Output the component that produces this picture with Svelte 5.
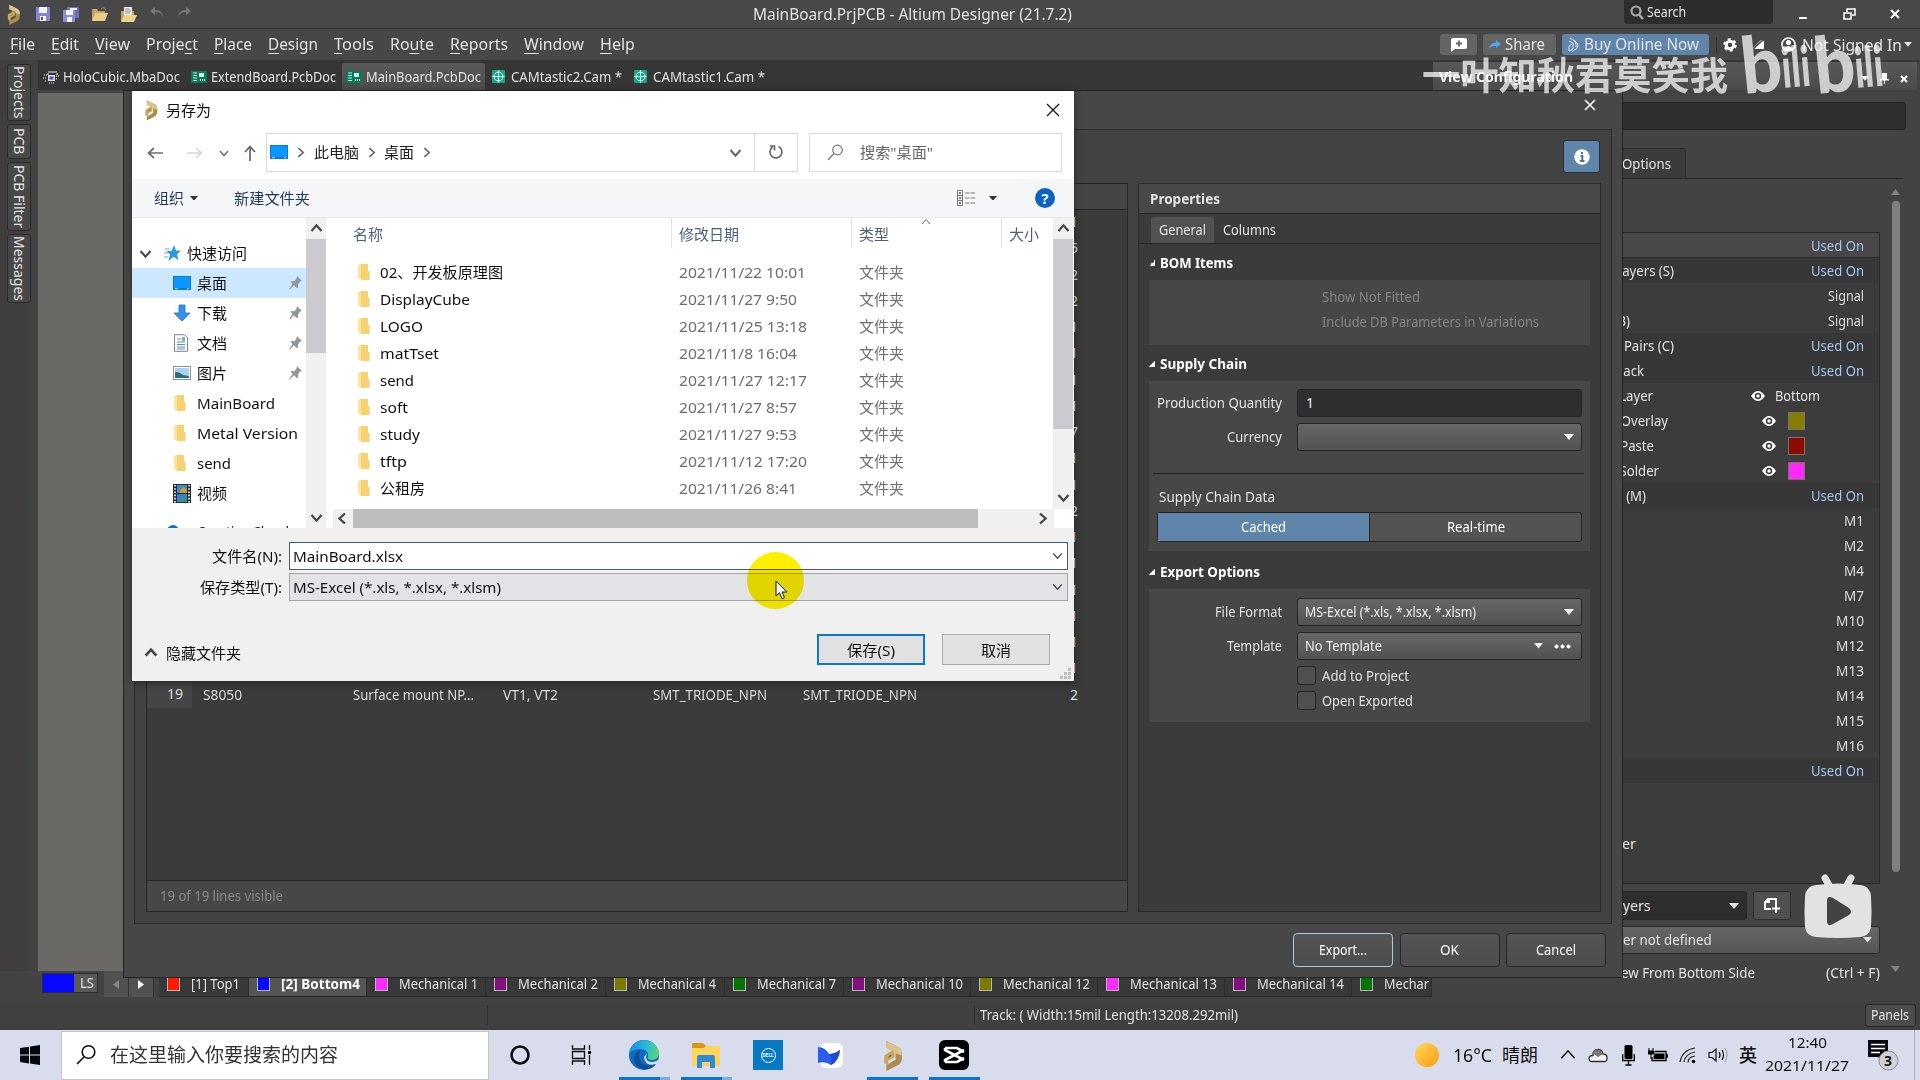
<script>
  // Condenses a label horizontally so that it fills the given width.
  function fit(node, width) {
    if (!width) return;
    const natural = node.getBoundingClientRect().width;
    node.style.transform = `scaleX(${width / natural})`;
    node.style.marginRight = `${width - natural}px`;
  }

  const menus = [
    ['', 'F', 'ile', 25], ['', 'E', 'dit', 28], ['', 'V', 'iew', 35], ['Proje', 'c', 't', 52],
    ['', 'P', 'lace', 38], ['', 'D', 'esign', 50], ['', 'T', 'ools', 40], ['Ro', 'u', 'te', 44],
    ['', 'R', 'eports', 58], ['', 'W', 'indow', 60], ['', 'H', 'elp', 35]
  ];
  const docs = [
    ['mba', 'HoloCubic.MbaDoc', 117, 147],
    ['pcb', 'ExtendBoard.PcbDoc', 125, 155],
    ['pcb', 'MainBoard.PcbDoc', 115, 143],
    ['cam', 'CAMtastic2.Cam *', 111, 142],
    ['cam', 'CAMtastic1.Cam *', 112, 142]
  ];
  const counts = [1, 5, 2, 2, 1, 1, 1, 1, 7, 1, 1, 2, 1, 1, 1, 1, 1, 1, 2];
  const quick = [
    ['desktop', '桌面', 30, true], ['down', '下载', 30, true], ['doc', '文档', 30, true], ['pic', '图片', 30, true],
    ['folder', 'MainBoard', 78, false], ['folder', 'Metal Version', 101, false], ['folder', 'send', 34, false], ['video', '视频', 30, false]
  ];
  const files = [
    ['02、开发板原理图', 123, '2021/11/22 10:01', 127], ['DisplayCube', 90, '2021/11/27 9:50', 118],
    ['LOGO', 43, '2021/11/25 13:18', 128], ['matTset', 59, '2021/11/8 16:04', 118],
    ['send', 34, '2021/11/27 12:17', 128], ['soft', 28, '2021/11/27 8:57', 118],
    ['study', 40, '2021/11/27 9:53', 118], ['tftp', 27, '2021/11/12 17:20', 128],
    ['公租房', 45, '2021/11/26 8:41', 118]
  ];
  const used = 'Used On';
  const config = [
    { r: used, head: true }, { l: 'Layers (S)', e: 240, r: used }, { r: 'Signal' }, { l: '(B)', e: 196, r: 'Signal' },
    { l: 'Pairs (C)', e: 240, r: used }, { l: 'Stack', e: 210, r: used }, { l: 'Layer', e: 219, bottom: true },
    { l: 'Overlay', e: 234, c: '#857c00' }, { l: 'Paste', e: 220, c: '#8c0b00' }, { l: 'Solder', e: 225, c: '#fc2bfb' },
    { l: '(M)', e: 212, r: used }, { r: 'M1' }, { r: 'M2' }, { r: 'M4' }, { r: 'M7' }, { r: 'M10' }, { r: 'M12' },
    { r: 'M13' }, { r: 'M14' }, { r: 'M15' }, { r: 'M16' }, { r: used }
  ];
  const rWidths = { 'Used On': 53, Signal: 36, M1: 20, M2: 20, M4: 20, M7: 20 };
  const layers = [
    ['#ff1a00', '[1] Top1', 49, 90], ['#0909ff', '[2] Bottom4', 79, 118], ['#fc2bfb', 'Mechanical 1', 79, 119],
    ['#84107f', 'Mechanical 2', 80, 120], ['#7d7800', 'Mechanical 4', 78, 119], ['#067306', 'Mechanical 7', 79, 119],
    ['#84107f', 'Mechanical 10', 87, 127], ['#7d7800', 'Mechanical 12', 87, 127], ['#fc2bfb', 'Mechanical 13', 87, 127],
    ['#84107f', 'Mechanical 14', 87, 127], ['#067306', 'Mechar', 45, 80]
  ];
</script>

{#snippet t(s, w)}<span class="t" use:fit={w}>{s}</span>{/snippet}

{#snippet altium(w, h)}
  <svg width={w} height={h} viewBox="0 0 20 30">
    <path d="M4 1L16 7Q19 9 19 13V18Q19 22 16 24L4 30V24.500L13 19V11.500L4 7.500z" fill="#ab8d50" />
    <path d="M4 1L16 7Q19 9 19 13V15L13 13V11.500L4 7.500z" fill="#dcc387" />
    <path d="M2 15L9 10.500Q12 10 12 13V16.500L6 20V25L2 22.500z" fill="#c6a763" />
    <path d="M6 16L9 14v1.500L6 17.500z" fill="#8d7340" />
  </svg>
{/snippet}

{#snippet icon(kind)}
  {#if kind === 'folder'}
    <svg width="14" height="18" viewBox="0 0 14 18"><path d="M1 2 L3 1 H11 V8 H12.5 V17 L3 16.5 L1 15 Z" fill="#ffe59a" /><path d="M4 1 H11 V8 H12.5 V17 H4 Z" fill="#f5d274" /></svg>
  {:else if kind === 'desktop'}
    <svg width="18" height="14" viewBox="0 0 18 14"><rect width="18" height="14" fill="#0d78d4" /><rect x="1" y="1" width="16" height="11" fill="#0a98ff" /><path d="M2 12.7h3M14 12.7h2" stroke="#bfe3ff" /></svg>
  {:else if kind === 'down'}
    <svg width="18" height="18" viewBox="0 0 18 18"><path d="M6 1h6v8h5l-8 8-8-8h5z" fill="#3392e8" stroke="#1a73c6" stroke-width=".8" /></svg>
  {:else if kind === 'doc'}
    <svg width="16" height="18" viewBox="0 0 16 18"><path d="M1.5.7h10l3 3v13.6h-13z" fill="#fff" stroke="#7d858c" /><path d="M4 5h4M4 8h8M4 10.500h8M4 13h8M4 15h8" stroke="#5b8fae" /><path d="M9 3h3v4H9z" fill="#7fa7bd" /></svg>
  {:else if kind === 'pic'}
    <svg width="18" height="14" viewBox="0 0 18 14"><rect x=".5" y=".5" width="17" height="13" fill="#fff" stroke="#8b949b" /><rect x="2" y="2" width="14" height="10" fill="#a8d3ef" /><path d="M2 6q5 0 8 3l6 1v2H2z" fill="#2c6f7b" /></svg>
  {:else if kind === 'video'}
    <svg width="18" height="19" viewBox="0 0 18 19"><rect width="18" height="19" fill="#262c33" /><rect x="4" y="1" width="10" height="8" fill="#4986c5" /><rect x="4" y="10" width="10" height="8" fill="#3f7fd0" /><path d="M7 7l3-4 4 3v3H7z" fill="#c4a52c" /><path d="M6 17l4-4 4 3v2z" fill="#2d9b68" /><path d="M2 1v18M16 1v18" stroke="#fff" stroke-width="1.600" stroke-dasharray="1.600 1.600" /></svg>
  {:else if kind === 'mba'}
    <svg width="17" height="14" viewBox="0 0 17 14"><path d="M5 2h9M4 4h2M13 4h2" stroke="#aaa" stroke-width="1.500" /><rect x="5" y="5" width="7" height="6" fill="#ddd" /><rect x="6.500" y="6.500" width="4" height="3" fill="#5154bf" /><path d="M1 5h3M0 8h3M2 11h2M13 6h3M13 9h2M6 13h6" stroke="#bbb" stroke-width="1.500" stroke-dasharray="1 1" /></svg>
  {:else if kind === 'pcb'}
    <svg width="16" height="12" viewBox="0 0 16 12"><rect width="16" height="12" fill="#08795a" /><path d="M2 2h4M2 4.500h4M2 7h4M2 9.500h4" stroke="#cdeee2" stroke-width="1.200" /><rect x="8" y="2" width="5" height="4" fill="#d9f4ea" /><path d="M9 9h6" stroke="#bfe6d8" stroke-width="2" stroke-dasharray="1 1" /></svg>
  {:else if kind === 'cam'}
    <svg width="13" height="13" viewBox="0 0 13 13"><rect width="13" height="13" rx="1" fill="#12a884" /><circle cx="6.500" cy="6.500" r="4.500" fill="none" stroke="#dff7f0" /><path d="M6.500 0v13M0 6.500h13" stroke="#dff7f0" /></svg>
  {/if}
{/snippet}

{#snippet chev(rot, size, color, sw)}
  <svg class={rot} width={size} height={size} viewBox="0 0 12 12"><path d="M2 4l4 4.500L10 4" fill="none" stroke={color} stroke-width={sw} /></svg>
{/snippet}

{#snippet caret(w)}
  <svg width={w} height={w * 0.6} viewBox="0 0 10 6"><path d="M0 0h10L5 6z" fill="currentColor" /></svg>
{/snippet}

{#snippet eye()}
  <svg width="14" height="12" viewBox="0 0 14 12"><path d="M0 6Q7-4 14 6Q7 16 0 6z" fill="#fff" /><circle cx="7" cy="6" r="3.200" fill="#3b3b3b" /><circle cx="7" cy="6" r="1.700" fill="#fff" /></svg>
{/snippet}

<div class="screen">
  <header class="title">
    <div class="quickbar">
      {@render altium(15, 21)}
      <svg width="14" height="14" viewBox="0 0 14 14"><path d="M0 0h14v14H0z" fill="#8785cf" /><path d="M3 0h8v6H3zM4 9h6v5H4z" fill="#f3f3ff" /><path d="M5 10h2v3H5z" fill="#555" /></svg>
      <svg width="16" height="15" viewBox="0 0 16 15"><path d="M4 0h12v11H4z" fill="#6f6cba" /><path d="M7 1h7v2H7z" fill="#eee" /><path d="M0 3h12v12H0z" fill="#8d8bd3" /><path d="M3 3h7v5H3zM4 10h5v5H4z" fill="#f3f3ff" /></svg>
      <svg width="16" height="14" viewBox="0 0 16 14"><path d="M0 2h5l1 2h7v9H0z" fill="#c7a55c" /><path d="M3 6h13l-3 8H0z" fill="#eccb83" /><path d="M9 2q3-3 5 1" fill="none" stroke="#86969b" /></svg>
      <svg width="16" height="15" viewBox="0 0 16 15"><path d="M0 4h13v10H0z" fill="#c7a55c" /><path d="M3 0h8v9H3z" fill="#f5f5f5" /><path d="M4 2h5M4 4h6M4 6h5" stroke="#888" /><path d="M3 8h13l-3 7H0z" fill="#f1d08a" /></svg>
      <svg class="undo" width="14" height="11" viewBox="0 0 14 11"><path d="M5 0L0 4l5 4V5.500q6-1 8 5Q13 3 5 3z" fill="#777" /></svg>
      <svg class="undo" width="14" height="11" viewBox="0 0 14 11"><path d="M9 0l5 4-5 4V5.500Q3 4.500 1 10.500 1 3 9 3z" fill="#777" /></svg>
    </div>
    <div class="caption">{@render t('MainBoard.PrjPCB - Altium Designer (21.7.2)', 319)}</div>
    <div class="search">
      <svg width="14" height="15" viewBox="0 0 14 15"><circle cx="6" cy="6" r="4.500" fill="none" stroke="#aaa" stroke-width="2.200" /><path d="M9 9.500l4 4.500" stroke="#aaa" stroke-width="2.500" /></svg>
      {@render t('Search', 39)}
    </div>
    <div class="winbtns">
      <svg width="12" height="14" viewBox="0 0 12 14"><path d="M2 11h8" stroke="#fff" stroke-width="2" /></svg>
      <svg width="13" height="12" viewBox="0 0 13 12"><path d="M4 4V1h8v6H9M1 5h7v6H1z" fill="none" stroke="#fff" stroke-width="1.500" /></svg>
      <svg width="10" height="10" viewBox="0 0 10 10"><path d="M1 1l8 8M9 1L1 9" stroke="#fff" stroke-width="2" /></svg>
    </div>
  </header>

  <nav class="menu">
    <div class="items">
      {#each menus as m}
        <span class="t" use:fit={m[3]}>{m[0]}<u>{m[1]}</u>{m[2]}</span>
      {/each}
    </div>
    <div class="btn comment"><svg width="17" height="14" viewBox="0 0 17 14"><path d="M2 0h13q2 0 2 2v7q0 2-2 2H5l-4 3V2q0-2 2-2z" fill="#fff" /><path d="M9 2.500v6M6 5.500h6" stroke="#666" stroke-width="1.800" /></svg></div>
    <div class="btn share"><svg width="12" height="9" viewBox="0 0 12 9"><path d="M7 0l5 4-5 4V6Q2 5.500 0 9 1 2.500 7 2.500z" fill="#50a5f5" /></svg>{@render t('Share', 40)}</div>
    <div class="btn buy"><svg width="11" height="15" viewBox="0 0 11 15"><path d="M2 1l5 3q3 2 3 5t-6 5.500M1 4l4 2v6L1 14V9l3-2M5 3l3 3v4" fill="none" stroke="#dce8f5" /></svg>{@render t('Buy Online Now', 115)}</div>
    <div class="account">
      <svg width="14" height="14" viewBox="0 0 14 14"><circle cx="7" cy="7" r="3.700" fill="none" stroke="#fff" stroke-width="3" /><circle cx="7" cy="7" r="5.700" fill="none" stroke="#fff" stroke-width="2" stroke-dasharray="3 2.970" /></svg>
      <svg width="14" height="12" viewBox="0 0 14 12"><path d="M1 10L10 1l3 1v8H4z" fill="#fff" /><path d="M0 12L13 0" stroke="#474747" stroke-width="1.500" /></svg>
      <svg width="15" height="15" viewBox="0 0 15 15"><circle cx="7.500" cy="7.500" r="6.500" fill="none" stroke="#fff" stroke-width="1.600" /><circle cx="7.500" cy="5.500" r="2.600" fill="#fff" /><path d="M3 12q4.500-6 9 0-4.500 4-9 0" fill="#fff" /></svg>
      {@render t('Not Signed In', 100)}
      {@render caret(8)}
    </div>
  </nav>

  <div class="doctabs">
    {#each docs as d, i}
      <div class="doc" class:on={i === 2} style:width="{d[3]}px">{@render icon(d[0])}{@render t(d[1], d[2])}</div>
    {/each}
  </div>

  <main class="work">
    <aside class="rail">
      <div class="r1">Projects</div><div class="r2">PCB</div><div class="r3">PCB Filter</div><div class="r4">Messages</div>
    </aside>
    <div class="canvas"></div>
    <section class="view">
      <div class="vtitle"><b>{@render t('View Configuration', 134)}</b>
        <span class="pins">{@render caret(8)}<svg width="9" height="11" viewBox="0 0 9 11"><path d="M2 0h5v6h2v1.500H0V6h2z" fill="#fff" /><path d="M4.500 7v4" stroke="#fff" /></svg><svg width="8" height="8" viewBox="0 0 8 8"><path d="M1 1l6 6M7 1L1 7" stroke="#fff" stroke-width="2" /></svg></span>
      </div>
      <div class="vfield"></div>
      <div class="vtabs"><div>{@render t('Options', 49)}</div></div>
      <div class="vbody">
        <div class="vmain">
          <div class="vlist">
            {#each config as c}
              <div class="vrow" class:head={c.head} class:dim={c.r === used && !c.head}>
                {#if c.l}<span class="vl" style:width="{c.e}px">{c.l}</span>{/if}
                {#if c.bottom}<span class="vb">{@render eye()}{@render t('Bottom', 45)}</span>{/if}
                {#if c.c}<span class="vs">{@render eye()}<i style:background={c.c}></i></span>{/if}
                {#if c.r}<span class="vr" class:link={c.r === used}>{@render t(c.r, rWidths[c.r] ?? 28)}</span>{/if}
              </div>
            {/each}
            <div class="other"><span>er</span></div>
          </div>
          <div class="vsel">
            <div class="dark"><span>ayers</span>{@render caret(10)}</div>
            <div class="add"><svg width="17" height="17" viewBox="0 0 17 17"><path d="M7 12H1V5l3-3h8v5M1 5h4V2M12 7v9M8 11.500h8" fill="none" stroke="#fff" stroke-width="1.800" /></svg></div>
            <svg width="13" height="14" viewBox="0 0 13 14"><path d="M1 1h9l2 2v10H1zM4 1v4h5V1M3 13V8h7v5" fill="none" stroke="#999" stroke-width="1.500" /></svg>
            <svg width="11" height="14" viewBox="0 0 11 14"><path d="M0 2h11M3 1h5M2 4h7v9H2z" stroke="#aaa" fill="#999" stroke-width="1.500" /></svg>
          </div>
          <div class="vdef"><span>Layer not defined</span>{@render caret(9)}</div>
          <div class="vflip"><span>View From Bottom Side</span>{@render t('(Ctrl + F)', 54)}</div>
        </div>
        <div class="vscroll"><svg width="9" height="6" viewBox="0 0 9 6"><path d="M0 6h9L4.500 0z" fill="#828282" /></svg><i></i><svg width="9" height="6" viewBox="0 0 9 6"><path d="M0 0h9L4.500 6z" fill="#828282" /></svg></div>
      </div>
    </section>
  </main>

  <div class="layers">
    <div class="ls"><i></i><span>{@render t('LS', 14)}</span></div>
    <div class="arr"><svg width="6" height="9" viewBox="0 0 6 9"><path d="M6 0v9L0 4.500z" fill="#858585" /></svg></div>
    <div class="arr"><svg width="6" height="9" viewBox="0 0 6 9"><path d="M0 0v9l6-4.500z" fill="#fff" /></svg></div>
    <div class="ltabs">
      {#each layers as l, i}
        <div class="ltab" class:on={i === 1} style:width="{l[3]}px"><i style:background={l[0]}></i>{@render t(l[1], l[2])}</div>
      {/each}
    </div>
  </div>

  <footer class="status">
    <div class="s1"></div><div class="s2"></div>
    <div class="s3">{@render t('Track: ( Width:15mil Length:13208.292mil)', 258)}</div>
    <div class="panels">{@render t('Panels', 38)}</div>
  </footer>

  <div class="taskbar">
    <div class="start"><svg width="20" height="20" viewBox="0 0 20 20"><path d="M0 3l9-1.300V9.500H0zM10 1.500L20 0v9.500H10zM0 10.500h9v7.900L0 17zM10 10.500h10V20l-10-1.500z" fill="#05060f" /></svg></div>
    <div class="tsearch"><svg width="22" height="22" viewBox="0 0 22 22"><circle cx="13.500" cy="8" r="6.300" fill="none" stroke="#111" stroke-width="1.600" /><path d="M9 13l-7 7" stroke="#111" stroke-width="1.600" /></svg>{@render t('在这里输入你要搜索的内容', 228)}</div>
    <div class="apps">
      <div><svg width="22" height="22" viewBox="0 0 22 22"><circle cx="11" cy="11" r="8.500" fill="none" stroke="#0b0c14" stroke-width="2.600" /></svg></div>
      <div><svg width="22" height="22" viewBox="0 0 22 22"><path d="M1.500 1v4h12V1M1.500 21v-4h12v4M1.500 7.500h12v7h-12zM18.500 1v5M18.500 11v10" fill="none" stroke="#0b0c14" stroke-width="1.300" /><rect x="17" y="7" width="3" height="3" /></svg></div>
      <div class="run split"><svg width="30" height="30" viewBox="0 0 30 30">
        <defs><linearGradient id="edge" x1="0" y1="0.3" x2="1" y2="0.5"><stop offset="0" stop-color="#168de0" /><stop offset=".55" stop-color="#27b9da" /><stop offset="1" stop-color="#55d873" /></linearGradient></defs>
        <circle cx="15" cy="15" r="15" fill="#0f69bd" /><path d="M0 14C1 5 8 0 15 0c9 0 15 7 15 13 0 5-4 7-7 7-4 0-5-2-4-4 1-4-3-7-8-7-6 0-10 3-11 5z" fill="url(#edge)" /><path d="M10 15c0 9 7 13 17 9-7 9-20 6-22-4 0-5 3-9 6-10z" fill="#0c4d9c" /><path d="M18 13c-2 5-1 8 4 9 3 0 5-.5 7-2l1 1-3 3q-11 3-12-7z" fill="#d8dcec" />
      </svg></div>
      <div class="run split"><svg width="28" height="25" viewBox="0 0 28 25"><path d="M0 1q0-1 1-1h10l3 3-3 4H0z" fill="#d9980f" /><path d="M0 5h12l3-2h12q1 0 1 1v19H0z" fill="#ffd45d" /><path d="M5 25V14q0-2 2-2h14q2 0 2 2v11h-5v-6h-8v6z" fill="#2f8bd6" /></svg></div>
      <div><span class="dell"><b>DELL</b></span></div>
      <div><svg width="25" height="25" viewBox="0 0 25 25"><rect x="2" width="23" height="25" rx="6" fill="#fff" /><path d="M0 4Q7 4 11 11q6 0 11-4-1 11-9 15-6-4-13-2z" fill="#2b5df0" /><path d="M11 11q6 0 11-4-1 11-9 15 2-6-2-11z" fill="#1c4bd0" /></svg></div>
      <div class="run">{@render altium(23, 31)}</div>
      <div class="run"><svg width="30" height="30" viewBox="0 0 30 30"><rect width="30" height="30" rx="6" fill="#000" /><path d="M6 8h12l7 4M6 22h12l7-4M25 10L6 20M6 10l19 10" fill="none" stroke="#fff" stroke-width="2.600" /><path d="M6 8v3M6 19v3" stroke="#fff" stroke-width="2.500" /></svg></div>
    </div>
    <div class="tray">
      <div><span class="sun"></span></div>
      <div class="big">{@render t('16°C', 39)}</div>
      <div class="big">{@render t('晴朗', 36)}</div>
      <div class="gap"></div>
      <div>{@render chev('up', 20, '#111', 0.9)}</div>
      <div><svg width="20" height="15" viewBox="0 0 20 15"><path d="M4 13.500q-3 0-3-3t4-3q0-6 5-6 4 0 5 4.500 4 0 4 4t-3 3.500z" fill="#f2f3f5" stroke="#333" stroke-width="1.300" /><path d="M4 5q3-5 7-3 3 1 4 4l-5 3z" fill="#777" /></svg></div>
      <div><svg width="13" height="21" viewBox="0 0 13 21"><rect x="2.500" width="8" height="14" rx="1.500" /><path d="M.7 9v6.500h11.600V9M6.500 15v5M3.500 20h6" fill="none" stroke="#000" stroke-width="1.300" /></svg></div>
      <div><svg width="20" height="15" viewBox="0 0 20 15"><path d="M7 3.500h11v9H4V9" fill="none" stroke="#000" stroke-width="1.300" /><path d="M7 5.500h9.500V11H5.500V8zM18 6h2v4h-2z" /><path d="M1 0v3M5 0v3M0 3h6v3H0zM3 6v5" fill="#000" stroke="#000" /></svg></div>
      <div><svg width="18" height="17" viewBox="0 0 18 17"><path d="M1 15Q3 3 16 1M5 15Q6 7 16 5M9 15.500Q9 10 16 9" fill="none" stroke="#222" stroke-width="1.200" /><circle cx="14.500" cy="14.500" r="1.800" /></svg></div>
      <div><svg width="20" height="16" viewBox="0 0 20 16"><path d="M1 5.500h3L8 2v12L4 10.500H1z" fill="none" stroke="#111" stroke-width="1.200" /><path d="M11 5q2 3 0 6M14 3q3 5 0 10" fill="none" stroke="#111" stroke-width="1.200" /><path d="M17 1q4 7 0 14" fill="none" stroke="#999" /></svg></div>
      <div class="ime">英</div>
      <div class="clock">{@render t('12:40', 39)}{@render t('2021/11/27', 84)}</div>
      <div class="note"><svg width="32" height="32" viewBox="0 0 32 32"><path d="M0 1h20v17h-6v4l-4-4H0z" fill="#05060f" /><path d="M3 5.500h14M3 9.500h14M3 13.500h9" stroke="#fff" stroke-width="1.500" /><circle cx="20.500" cy="21.500" r="9.500" fill="#d0d1d6" stroke="#8b8c92" /></svg><b>3</b></div>
    </div>
  </div>

  <!-- Bill of materials dialog -->
  <section class="bom">
    <div class="btitle"><svg width="12" height="12" viewBox="0 0 12 12"><path d="M1 1l10 10M11 1L1 11" stroke="#fff" stroke-width="1.600" /></svg></div>
    <div class="binner">
      <div class="binfo"><div><svg width="16" height="16" viewBox="0 0 16 16"><circle cx="8" cy="8" r="7.700" fill="#fff" /><path d="M8 3v2.200M6.500 7H8.300v4.500M6 12h4.500" stroke="#4c6f94" stroke-width="2" fill="none" /></svg></div></div>
      <div class="bcols">
        <div class="grid">
          <div class="ghead"></div>
          <div class="gbody">
            {#each counts as n, i}
              <div class="grow">
                {#if i === 18}
                  <span class="idx">{i + 1}</span>
                  <span class="c1">{@render t('S8050', 39)}</span><span class="c2">{@render t('Surface mount NP...', 121)}</span><span class="c3">{@render t('VT1, VT2', 55)}</span><span class="c4">{@render t('SMT_TRIODE_NPN', 114)}</span><span class="c4">{@render t('SMT_TRIODE_NPN', 114)}</span>
                {/if}
                <span class="qty">{n}</span>
              </div>
            {/each}
          </div>
          <div class="gfoot">{@render t('19 of 19 lines visible', 123)}</div>
        </div>
        <div class="props">
          <div class="ptitle"><b>{@render t('Properties', 70)}</b></div>
          <div class="ptabs"><span class="on">{@render t('General', 47)}</span><span>{@render t('Columns', 53)}</span></div>
          <div class="pbody">
            <h4><s></s>{@render t('BOM Items', 73)}</h4>
            <div class="box b1"><p>{@render t('Show Not Fitted', 98)}</p><p>{@render t('Include DB Parameters in Variations', 217)}</p></div>
            <h4 class="h2"><s></s>{@render t('Supply Chain', 87)}</h4>
            <div class="box b2">
              <div class="field"><div class="lab">{@render t('Production Quantity', 125)}</div><div class="inp">1</div></div>
              <div class="field"><div class="lab">{@render t('Currency', 55)}</div><div class="pick"><div></div>{@render caret(10)}</div></div>
              <hr />
              <div class="scd">{@render t('Supply Chain Data', 116)}</div>
              <div class="toggle"><span class="on">{@render t('Cached', 45)}</span><span>{@render t('Real-time', 58)}</span></div>
            </div>
            <h4 class="h3"><s></s>{@render t('Export Options', 100)}</h4>
            <div class="box b3">
              <div class="field"><div class="lab">{@render t('File Format', 67)}</div><div class="pick"><div>{@render t('MS-Excel (*.xls, *.xlsx, *.xlsm)', 171)}</div>{@render caret(10)}</div></div>
              <div class="field"><div class="lab">{@render t('Template', 55)}</div><div class="pick"><div>{@render t('No Template', 77)}</div>{@render caret(9)}<svg class="dots" width="17" height="5" viewBox="0 0 17 5"><circle cx="2.500" cy="2.500" r="2" fill="#fff" /><circle cx="8.500" cy="2.500" r="2" fill="#fff" /><circle cx="14.500" cy="2.500" r="2" fill="#fff" /></svg></div></div>
              <div class="chk"><i></i>{@render t('Add to Project', 87)}</div>
              <div class="chk"><i></i>{@render t('Open Exported', 91)}</div>
            </div>
          </div>
        </div>
      </div>
    </div>
    <div class="bbtns"><span class="focus">{@render t('Export...', 48)}</span><span>{@render t('OK', 19)}</span><span>{@render t('Cancel', 40)}</span></div>
  </section>

  <!-- Save-as dialog -->
  <section class="save">
    <div class="sv-title">{@render altium(14, 22)}{@render t('另存为', 45)}<svg class="x" width="14" height="14" viewBox="0 0 14 14"><path d="M1 1l12 12M13 1L1 13" stroke="#111" stroke-width="1.200" /></svg></div>
    <div class="sv-addr">
      <svg width="16" height="12" viewBox="0 0 16 12"><path d="M7 1L1.500 6 7 11M1.500 6H16" fill="none" stroke="#6e6e6e" stroke-width="1.700" /></svg>
      <svg width="16" height="12" viewBox="0 0 16 12"><path d="M9 1l5.500 5L9 11M14.500 6H0" fill="none" stroke="#d4d4d4" stroke-width="1.500" /></svg>
      {@render chev('d', 12, '#777', 1.800)}
      <svg width="12" height="16" viewBox="0 0 12 16"><path d="M1 7L6 1.500 11 7M6 1.500V16" fill="none" stroke="#666" stroke-width="1.700" /></svg>
      <div class="path">
        {@render icon('desktop')}{@render chev('r', 13, '#666', 1.500)}{@render t('此电脑', 45)}{@render chev('r', 13, '#666', 1.500)}{@render t('桌面', 30)}{@render chev('r', 13, '#666', 1.500)}
        <span class="grow1"></span>{@render chev('d', 15, '#666', 1.600)}
        <div class="refresh"><svg width="16" height="16" viewBox="0 0 16 16"><path d="M10.500 2.500A6 6 0 1 1 4.500 3M2 2h4.500v4.500" fill="none" stroke="#666" stroke-width="1.700" /></svg></div>
      </div>
      <div class="find"><svg width="17" height="17" viewBox="0 0 17 17"><circle cx="10.500" cy="6" r="4.800" fill="none" stroke="#777" stroke-width="1.200" /><path d="M7 9.500l-6 6.500" stroke="#777" stroke-width="1.200" /></svg>{@render t('搜索"桌面"', 73)}</div>
    </div>
    <div class="sv-tool">
      {@render t('组织', 30)}<em>{@render caret(8)}</em>{@render t('新建文件夹', 76)}
      <span class="grow1"></span>
      <svg width="19" height="16" viewBox="0 0 19 16"><path d="M.5.500h5v15h-5zM.5 5.500h5M.5 10.500h5" fill="none" stroke="#777" /><path d="M2 3h2M2 8h2M2 13h2" stroke="#555" stroke-width="1.500" /><path d="M8 3h11M8 8h11M8 13h11" stroke="#777" stroke-dasharray="4.500 1" /></svg>
      <em>{@render caret(8)}</em>
      <span class="help">?</span>
    </div>
    <div class="sv-body">
      <div class="nav">
        <div class="nrow root">{@render chev('d', 15, '#444', 1.600)}<svg width="17" height="16" viewBox="0 0 17 16"><path d="M10 0l2 5.500 5 .2-4 3.500 1.500 6-5-3.400L4.500 16 6 9.500 2.500 6h5z" fill="#2d98e8" /><path d="M1 4h4M0 8h4M0 12h4" stroke="#57adf0" /></svg>{@render t('快速访问', 60)}</div>
        {#each quick as q, i}
          <div class="nrow" class:chosen={i === 0}><span class="ic">{@render icon(q[0])}</span>{@render t(q[1], q[2])}
            {#if q[3]}<svg class="pin" width="13" height="14" viewBox="0 0 13 14"><path d="M8 0l5 5-2 .6-2 3 .2 3L7.500 12 4.800 9.200 1 13.500 0 13.500 3.500 8 1.500 5.500 2.500 5l3 .2L7.700 2z" fill="#8e979e" /></svg>{/if}
          </div>
        {/each}
        <div class="nrow wps"><span class="ic"><i></i></span>{@render t('Creative Cloud', 92)}</div>
      </div>
      <div class="vbar">{@render chev('up', 15, '#444', 1.800)}<i></i><span class="grow1"></span>{@render chev('d', 15, '#444', 1.800)}</div>
      <div class="list">
        <div class="lmain">
          <div class="lcols">
            <div class="lhead"><span class="n">{@render t('名称', 30)}</span><span class="dt">{@render t('修改日期', 60)}</span><span class="ty">{@render t('类型', 30)}<em>{@render chev('up', 12, '#666', 1)}</em></span><span class="sz">{@render t('大小', 30)}</span></div>
            {#each files as f}
              <div class="lrow"><span class="ic">{@render icon('folder')}</span><span class="n">{@render t(f[0], f[1])}</span><span class="dt">{@render t(f[2], f[3])}</span><span class="ty">{@render t('文件夹', 45)}</span></div>
            {/each}
            <div class="lrow last"><svg width="14" height="18" viewBox="0 0 14 18"><path d="M.7.700h9l3.600 3.600V17H.7zM9 1v4h4" fill="none" stroke="#777" /></svg></div>
          </div>
          <div class="vbar v2">{@render chev('up', 15, '#444', 1.800)}<i></i><span class="grow1"></span>{@render chev('d', 15, '#444', 1.800)}</div>
        </div>
        <div class="hbar">{@render chev('l', 15, '#444', 1.800)}<i></i><span class="grow1"></span>{@render chev('r', 15, '#444', 1.800)}<b></b></div>
      </div>
    </div>
    <div class="sv-form">
      <div class="frow"><div class="cap">{@render t('文件名(N):', 70)}</div><div class="fld white">{@render t('MainBoard.xlsx', 110)}{@render chev('d', 13, '#444', 1.200)}</div></div>
      <div class="frow"><div class="cap">{@render t('保存类型(T):', 82)}</div><div class="fld">{@render t('MS-Excel (*.xls, *.xlsx, *.xlsm)', 208)}{@render chev('d', 13, '#444', 1.200)}</div></div>
      <div class="acts"><div class="hide">{@render chev('up', 16, '#444', 2)}{@render t('隐藏文件夹', 75)}</div><span class="grow1"></span><span class="b pri">{@render t('保存(S)', 48)}</span><span class="b">{@render t('取消', 30)}</span></div>
    </div>
    <svg class="grip" width="12" height="12" viewBox="0 0 12 12"><path d="M8 0h3v3H8zM4 4h3v3H4zM8 4h3v3H8zM0 8h3v3H0zM4 8h3v3H4zM8 8h3v3H8z" fill="#bbb" /></svg>
    <div class="spot"></div>
    <svg class="cursor" width="13" height="20" viewBox="0 0 13 20"><path d="M1 1v15l3.500-3.300 2.500 6 2.500-1.200L7 12h5z" fill="#fff" stroke="#111" /></svg>
  </section>

  <div class="mark">
    <span class="who">{@render t('一叶知秋君莫笑我', 306)}</span>
    <span class="logo"><b class="bb">b</b><b class="ii">ili</b><b class="bb">b</b><b class="ii">ili</b></span>
  </div>
  <svg class="tv" width="68" height="66" viewBox="0 0 68 66"><path d="M21 4l5 9M47 4l-5 9" stroke="#e2e2e2" stroke-width="7" stroke-linecap="round" /><path d="M12 11Q34 8 56 11 66 12 67 22q1 16 0 31-1 9-11 10-22 2-44 0Q2 62 1 53 0 38 1 22 2 12 12 11zM23 27V48Q24 53 29 50L45 41Q49 38 45 34L29 24Q23 21 23 27z" fill="#e2e2e2" fill-rule="evenodd" /></svg>
</div>

<style>
  :global(body) { margin: 0; overflow: hidden; }
  .screen, .screen :global(*) { box-sizing: border-box; }
  .screen { position: relative; width: 1920px; height: 1080px; overflow: hidden; display: flex; flex-direction: column; background: #434343; color: #e3e3e3; font: 14px/20px "Noto Sans", "Noto Sans CJK SC", sans-serif; }
  svg { display: block; flex: none; }
  .t { display: inline-block; white-space: pre; transform-origin: 0 50%; flex: none; }
  .grow1 { flex: 1; }
  .up { transform: rotate(180deg); }
  .r { transform: rotate(-90deg); }
  .l { transform: rotate(90deg); }

  .title { height: 29px; flex: none; background: #484848; border-bottom: 1px solid #323232; display: grid; grid-template-columns: 753px 871px 149px 1fr; }
  .quickbar { display: flex; align-items: center; padding: 0 0 1px 6px; gap: 13px; }
  .quickbar svg:first-child { margin-right: 2px; }
  .quickbar .undo { margin: 0 0 4px; }
  .caption { font-size: 16px; line-height: 29px; }
  .search { background: #2d2d2d; border-radius: 0 0 4px 4px; height: 24px; display: flex; align-items: center; padding: 0 0 0 6px; gap: 3px; }
  .winbtns { display: flex; align-items: center; padding: 0 0 2px 24px; gap: 34px; }

  .menu { height: 31px; flex: none; background: #474747; display: flex; align-items: center; font-size: 17px; }
  .items { display: flex; gap: 16px; padding: 0 0 2px 10px; width: 1440px; }
  .menu u { text-underline-offset: 3px; text-decoration-thickness: 1px; }
  .btn { height: 21px; background: #646464; border-radius: 3px; display: flex; align-items: center; gap: 5px; margin-right: 6px; font-size: 16px; padding-left: 6px; }
  .btn .t { margin-top: -1px; }
  .comment { width: 37px; padding-left: 10px; }
  .share { width: 73px; gap: 4px; }
  .buy { width: 147px; background: #5f85ab; }
  .account { display: flex; align-items: center; padding-left: 6px; font-size: 16px; flex: 1; border-left: 1px solid #333; height: 16px; margin-left: 1px; }
  .account svg:nth-child(2) { margin: 0 13px 0 14px; }
  .account svg:nth-child(3) { margin-right: 6px; margin-left: 3px; }
  .account svg:last-child { margin-left: 2px; }

  .doctabs { height: 30px; flex: none; background: #363636; display: flex; padding: 3px 0 0 39px; }
  .doc { display: flex; align-items: center; gap: 4px; padding: 0 0 0 4px; height: 27px; flex: none; }
  .doc:first-child { gap: 3px; }
  .doc:nth-child(n+4) { padding-left: 7px; gap: 6px; }
  .doc.on { background: linear-gradient(#5a5a5a, #4b4b4b); border-radius: 3px 3px 0 0; }
  .doc:nth-child(2) { padding-left: 5px; }
  .doc:nth-child(3) { padding-left: 4px; margin-left: 1px; }

  .work { height: 881px; flex: none; display: flex; }
  .rail { width: 38px; background: linear-gradient(90deg, #3f3d3d 40%, #434343); margin-top: -30px; padding: 4px 7px; display: flex; flex-direction: column; gap: 3px; z-index: 1; }
  .rail div { writing-mode: vertical-rl; width: 24px; line-height: 22px; font-size: 14px; text-align: center; border: 1px solid #2b2b2b; border-radius: 3px; background: #484848; }
  .r1 { height: 57px; } .r2 { height: 35px; } .r3 { height: 69px; } .r4 { height: 69px; }
  .canvas { width: 1395px; background: #6b6966; margin-top: 3px; }
  .view { width: 487px; margin-top: -28px; background: #434343; display: flex; flex-direction: column; font-size: 14px; z-index: 1; }
  .vtitle { flex: none; height: 28px; width: 484px; background: linear-gradient(#585858, #4b4b4b); padding: 5px 9px 0 6px; display: flex; justify-content: space-between; font-size: 14.500px; line-height: 18px; color: #f4f4f4; }
  .pins { display: flex; align-items: center; gap: 11px; }
  .vfield { flex: none; margin: 12px 14px 0 0; height: 28px; background: #2e2e2e; border: 1px solid #262626; border-radius: 3px; }
  .vtabs { flex: none; margin: 18px 17px 0 0; height: 31px; border-bottom: 1px solid #272727; }
  .vtabs div { width: 253px; height: 31px; padding: 5px 0 0 188px; border: 1px solid #2a2a2a; border-radius: 3px 3px 0 0; background: #3b3b3b; }
  .vbody { display: flex; flex: none; height: 804px; }
  .vmain { width: 447px; padding-top: 53px; }
  .vlist { height: 652px; border: 1px solid #292929; background: #3c3c3c; }
  .vrow { height: 25px; display: grid; grid-template-columns: 317px 90px 1fr; line-height: 25px; padding-right: 15px; }
  .vrow.head { background: #484848; border-bottom: 1px solid #292929; }
  .vrow.dim { background: #373737; }
  .vl { grid-column: 1; grid-row: 1; text-align: right; transform: scaleX(.94); transform-origin: 100% 50%; }
  .vb { grid-column: 2 / 4; grid-row: 1; display: flex; align-items: center; gap: 10px; }
  .vs { grid-column: 2 / 4; grid-row: 1; display: flex; align-items: center; gap: 12px; padding-left: 11px; }
  .vs i { width: 17px; height: 18px; border: 1px solid #77736b; }
  .vr { grid-column: 2 / 4; grid-row: 1; text-align: right; color: #ddd; }
  .vr.link { color: #a3c6f2; }
  .other { padding: 51px 0 0 188px; }
  .vsel { display: flex; align-items: center; margin-top: 7px; height: 29px; }
  .dark { flex: none; width: 314px; height: 29px; background: #2e2e2e; border: 1px solid #282828; border-radius: 3px; display: flex; align-items: center; justify-content: space-between; padding: 0 7px 0 181px; }
  .add { flex: none; width: 38px; height: 29px; border: 1px solid #2c2c2c; border-radius: 3px; background: #505050; margin: 0 18px 0 6px; display: grid; place-items: center; }
  .vsel > svg { opacity: .8; margin-right: 32px; }
  .vdef { margin-top: 6px; height: 28px; border: 1px solid #2a2a2a; border-radius: 3px; background: linear-gradient(#666, #555); display: flex; align-items: center; justify-content: space-between; padding: 0 7px 0 162px; }
  .vdef span, .vflip > span:first-child { transform: scaleX(.95); transform-origin: 100% 50%; }
  .vflip { display: flex; justify-content: space-between; padding: 9px 0 0 169px; }
  .vscroll { width: 31px; padding-top: 10px; display: flex; flex-direction: column; align-items: center; }
  .vscroll i { width: 8px; height: 671px; background: #808080; border-radius: 4px; margin: 6px 0 94px; }

  .layers { height: 30px; flex: none; background: #434343; display: flex; padding-left: 42px; }
  .ls { width: 56px; height: 20px; margin-top: 2px; display: flex; border: 1px solid #2c2c2c; background: #5a5a5a; line-height: 18px; align-self: flex-start; }
  .ls i { width: 31px; background: #0909ff; margin-right: 6px; }
  .arr { width: 25px; height: 26px; background: #515151; display: grid; place-items: center; border-right: 1px solid #333; }
  .ls + .arr { margin-left: 6px; }
  .ltabs { display: flex; height: 26px; width: 1273px; overflow: hidden; background: #383838; margin-left: 5px; border-bottom: 1px solid #262626; }
  .ltab { display: flex; flex: none; align-items: center; gap: 11px; padding-left: 8px; border-right: 1px solid #2e2e2e; font-size: 14px; }
  .ltab i { width: 13px; height: 14px; border: 1px solid #b5b5b5; }
  .ltab.on { background: #555; font-weight: 700; color: #fff; }

  .status { height: 29px; flex: none; background: #404040; display: flex; align-items: center; font-size: 14px; padding-bottom: 1px; }
  .s1 { width: 488px; height: 20px; border-right: 1px solid #333; }
  .s2 { width: 487px; height: 20px; border-right: 1px solid #333; }
  .s3 { width: 890px; padding-left: 5px; }
  .panels { width: 51px; height: 23px; border: 1px solid #282828; border-radius: 3px; background: #4c4c4c; padding-left: 5px; }

  .taskbar { height: 50px; flex: none; background: #d8dcec; display: flex; color: #111; }
  .start { width: 61px; display: grid; place-items: center; }
  .start svg { margin-left: -1px; }
  .tsearch { width: 428px; height: 49px; margin-top: 1px; background: #fff; border: 1px solid #c4c4c9; display: flex; align-items: center; padding: 0 0 2px 13px; gap: 13px; font-size: 19px; color: #333; }
  .apps { display: flex; width: 916px; }
  .apps > div { width: 62px; display: grid; place-items: center; }
  .apps .run { background: linear-gradient(#0b74cc, #0b74cc) center bottom / 51px 3px no-repeat; }
  .apps .split { background: linear-gradient(90deg, #0b74cc 80%, #79aee2 80%) center bottom / 51px 3px no-repeat; }
  .dell { width: 30px; height: 30px; background: #0778c3; display: grid; place-items: center; }
  .dell b { width: 15px; height: 15px; border: 1px solid #fff; border-radius: 50%; font: 700 4.500px/13px "Noto Sans", sans-serif; color: #fff; text-align: center; }
  .tray { display: grid; grid-template-columns: 43px 48px 48px 9px repeat(7, 30px) 88px 66px; font-size: 16px; border-right: 1px solid #aaafbd; width: 510px; }
  .tray > div { display: flex; align-items: center; justify-content: center; }
  .sun { width: 24px; height: 24px; border-radius: 50%; background: linear-gradient(135deg, #ffd75c, #ff9d0c); }
  .big { font-size: 18px; }
  .ime { font-size: 18px; font-weight: 500; }
  .tray .clock { flex-direction: column; line-height: 23px; font-size: 15px; padding-bottom: 3px; }
  .tray .note { position: relative; }
  .note b { position: absolute; left: 33px; top: 21px; font-size: 14px; }

  .bom { position: absolute; z-index: 2; left: 123px; top: 90px; width: 1500px; height: 888px; background: #474747; border: 1px solid #232323; padding: 0 10px; font-size: 14px; }
  .btitle { height: 38px; display: flex; justify-content: flex-end; align-items: center; padding: 0 16px 10px 0; }
  .binner { height: 795px; border: 1px solid #2c2c2c; background: #424242; padding: 10px 10px 0 11px; }
  .binfo { display: flex; justify-content: flex-end; height: 43px; padding-right: 1px; }
  .binfo div { width: 37px; height: 33px; background: #5f85ab; border: 1px solid #27303a; border-radius: 3px; display: grid; place-items: center; }
  .bcols { display: flex; gap: 10px; }
  .grid { width: 982px; height: 729px; border: 1px solid #262626; background: #3b3b3b; display: flex; flex-direction: column; }
  .ghead { height: 26px; background: #454545; border-bottom: 1px solid #262626; flex: none; }
  .gbody { flex: 1; margin-top: -1px; }
  .grow { height: 26.250px; display: flex; align-items: center; color: #dcdcdc; }
  .idx { width: 45px; height: 100%; background: #454545; text-align: right; padding: 2px 9px 0 0; margin-right: 11px; }
  .c1, .c2, .c3, .c4 { width: 150px; }
  .qty { flex: 1; text-align: right; padding-right: 49px; }
  .gfoot { height: 31px; background: #474747; border-top: 1px solid #262626; color: #8a8a8a; padding: 5px 0 0 13px; }
  .props { width: 463px; height: 729px; border: 1px solid #2a2a2a; background: #3b3b3b; }
  .ptitle { height: 30px; background: #484848; border-bottom: 1px solid #262626; padding: 5px 0 0 11px; }
  .ptabs { height: 30px; border-bottom: 1px solid #272727; display: flex; padding: 3px 0 0 12px; line-height: 26px; }
  .ptabs > span { padding: 0 8px; width: 63px; }
  .ptabs > .on { background: #525252; border-radius: 3px 3px 0 0; margin-right: 1px; }
  .pbody { padding: 9px 10px 0; }
  h4 { margin: 0; height: 20px; display: flex; align-items: center; font-size: 14px; color: #fff; gap: 5px; }
  s { width: 6px; height: 6px; background: linear-gradient(135deg, transparent 50%, #fff 50%); }
  .box { background: #474747; margin-top: 7px; width: 441px; }
  .b1 { height: 65px; color: #858585; padding: 7px 0 0 173px; }
  .b1 p { margin: 0 0 5px; height: 20px; }
  .h2 { margin-top: 9px; }
  .h3 { margin-top: 11px; }
  .b2 { height: 170px; padding: 8px 0 0; }
  .b3 { height: 133px; padding-top: 9px; }
  .field { display: flex; height: 28px; margin-bottom: 6px; align-items: center; }
  .lab { width: 133px; display: flex; justify-content: flex-end; margin-right: 15px; }
  .inp, .pick { width: 285px; height: 28px; border: 1px solid #242424; border-radius: 3px; padding: 0 7px; display: flex; align-items: center; color: #f2f2f2; }
  .inp { background: #2e2e2e; padding-left: 8px; }
  .pick { background: linear-gradient(#676767, #525252); }
  .pick div { flex: 1; }
  .dots { margin: 0 3px 0 11px; }
  hr { border: 0; border-top: 1px solid #222; margin: 22px 6px 13px 4px; }
  .scd { margin-left: 10px; height: 20px; }
  .toggle { display: flex; margin: 5px 0 0 8px; width: 425px; height: 30px; border: 1px solid #262626; border-radius: 3px; background: #535353; color: #fff; }
  .toggle > span { flex: 1; display: flex; justify-content: center; align-items: center; }
  .toggle > .on { background: #5f85ab; border-right: 1px solid #262626; }
  .chk { display: flex; align-items: center; padding-left: 148px; gap: 6px; height: 25px; margin-top: -3px; }
  .chk + .chk { margin-top: 0; }
  .chk i { width: 19px; height: 19px; border: 1px solid #242424; border-radius: 3px; background: #505050; }
  .bbtns { display: flex; justify-content: flex-end; gap: 6.500px; padding: 9px 6px 0 0; }
  .bbtns > span { width: 100px; height: 34px; border: 1px solid #272727; border-radius: 4px; background: linear-gradient(#545454, #4d4d4d); color: #fff; display: flex; align-items: center; justify-content: center; }
  .bbtns > .focus { border-color: #a9c8ea; }

  .save { position: absolute; z-index: 3; left: 132px; top: 91px; width: 942px; height: 590px; background: #fff; color: #111; font-size: 15px; box-shadow: 0 2px 8px #0006; }
  .sv-title { height: 42px; display: flex; align-items: center; padding: 0 14px 5px 12px; gap: 8px; }
  .x { margin-left: auto; }
  .sv-addr { display: flex; align-items: center; height: 39px; padding-left: 15px; color: #222; }
  .sv-addr > svg:nth-child(2) { margin: 0 15px 0 24px; }
  .sv-addr > svg:nth-child(4) { margin: 0 10px 0 14px; }
  .path { width: 532px; height: 39px; border: 1px solid #d9d9d9; display: flex; align-items: center; padding: 0 0 1px 3px; gap: 6.300px; }
  .refresh { width: 43px; height: 37px; border-left: 1px solid #d9d9d9; display: grid; place-items: center; margin-left: 5px; }
  .find { width: 253px; height: 39px; border: 1px solid #d9d9d9; margin-left: 11px; display: flex; align-items: center; padding: 0 0 1px 17px; gap: 16px; color: #666; }
  .sv-tool { margin-top: 7px; height: 39px; background: #f5f6f8; border-bottom: 1px solid #e4e6e8; display: flex; align-items: center; padding: 0 19px 0 22px; color: #1e395b; }
  .sv-tool em { margin: 0 36px 0 6px; color: #333; }
  .sv-tool svg + em { margin: 0 38px 0 13px; }
  .help { width: 20px; height: 20px; border-radius: 50%; background: #0a62c4; color: #fff; text-align: center; font-weight: 700; }
  .sv-body { height: 310px; display: flex; overflow: hidden; }
  .nav { width: 174px; overflow: hidden; padding-top: 20px; }
  .nrow { height: 30px; display: flex; align-items: center; }
  .nrow.root { padding-left: 6px; gap: 6px; }
  .nrow.root svg + svg { margin-left: 5px; }
  .nrow.chosen { background: #cce8ff; }
  .ic { width: 24px; display: flex; }
  .nrow .ic { margin-left: 41px; }
  .pin { margin: 0 4px 0 auto; }
  .wps { margin-top: 8px; }
  .wps i { width: 12px; height: 12px; border-radius: 50%; background: #1173c8; margin-left: -6px; }
  .vbar { width: 20px; background: #f0f0f0; display: flex; flex-direction: column; align-items: center; padding: 3px 0; }
  .vbar i { width: 20px; height: 114px; background: #cbcbcf; margin-top: 3px; }
  .list { width: 748px; padding-left: 7px; display: flex; flex-direction: column; }
  .lmain { height: 291px; display: flex; overflow: hidden; }
  .lcols { width: 720px; }
  .v2 { padding-bottom: 4px; }
  .v2 i { height: 190px; }
  .lhead { height: 30px; display: flex; line-height: 32px; color: #4c607a; margin-bottom: 10px; }
  .lhead .n { width: 338px; padding-left: 20px; }
  .lhead .dt, .lhead .ty, .lhead .sz { border-left: 1px solid #e2e2e2; padding-left: 7px; }
  .lhead .dt { width: 180px; }
  .lhead .ty { width: 150px; display: flex; }
  .lhead em { margin-left: 31px; margin-top: -2px; }
  .lrow { height: 27px; display: flex; align-items: center; }
  .lrow .ic { margin-left: 24px; width: 23px; }
  .lrow .n { width: 299px; }
  .lrow .dt { width: 180px; color: #6d6d6d; }
  .lrow .ty { color: #6d6d6d; }
  .lrow.last { padding: 14px 0 0 25px; }
  .hbar { height: 19px; background: #f0f0f0; display: flex; align-items: center; padding-left: 2px; }
  .hbar i { width: 625px; height: 19px; background: #bebebe; margin-left: 3px; }
  .hbar b { width: 20px; height: 19px; background: #fff; margin-left: 4px; }
  .sv-form { height: 153px; background: #f0f0f0; padding-top: 14px; }
  .frow { display: flex; height: 28px; margin-bottom: 3px; align-items: center; }
  .cap { width: 150px; display: flex; justify-content: flex-end; margin-right: 7px; }
  .fld { width: 779px; height: 28px; border: 1px solid #a0a6a8; background: #e2e3e4; display: flex; align-items: center; justify-content: space-between; padding: 0 3px 1px; font-size: 15px; }
  .fld.white { background: #fff; border-color: #4d5d68; }
  .acts { display: flex; align-items: center; height: 31px; margin-top: 33px; padding: 0 24px 0 11px; }
  .hide { display: flex; align-items: center; gap: 7px; padding-top: 6px; }
  .b { width: 108px; height: 31px; border: 1px solid #adadad; background: #e1e1e1; display: flex; justify-content: center; align-items: center; }
  .b + .b { margin-left: 17px; }
  .pri { border: 2px solid #0a78d0; }
  .grip { position: absolute; right: 2px; bottom: 1px; }

  .spot { position: absolute; left: 615px; top: 461px; width: 57px; height: 57px; border-radius: 50%; background: #ffee00; mix-blend-mode: multiply; }
  .cursor { position: absolute; left: 643px; top: 489px; }
  .mark { position: absolute; z-index: 4; left: 1422px; top: 31px; display: flex; color: #fff; opacity: .72; }
  .who { font: 700 38px/44px "Noto Sans CJK SC", sans-serif; width: 306px; margin-top: 20px; }
  .logo { display: flex; align-items: flex-end; margin-left: 16px; height: 66px; }
  .bb { font: 900 78px/66px Lato, sans-serif; transform: rotate(-6deg) scaleX(.92); transform-origin: 0 100%; width: 40px; }
  .ii { font: 900 56px/60px Lato, sans-serif; transform: rotate(-5deg) scaleX(.66); transform-origin: 0 100%; width: 33px; }
  .tv { position: absolute; z-index: 4; left: 1804px; top: 874px; }
</style>
